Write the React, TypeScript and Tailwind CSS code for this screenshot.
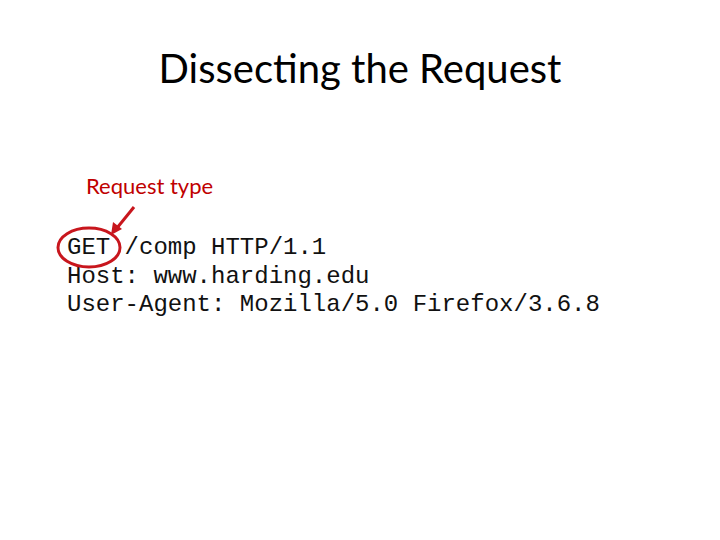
export default function App() {
  return (
    <div className="relative w-[720px] h-[540px] bg-white overflow-hidden">
      <div className="pt-[44px] flex justify-center">
        <h1 className="text-[40px] leading-[48px] text-black" style={{ fontFamily: "Lato, 'Open Sans', sans-serif" }}>
          Dissecting the Request
        </h1>
      </div>
      <div className="mt-[82px] pl-[86px] text-[22px] leading-[24px] text-[#c00000]" style={{ fontFamily: "Lato, 'Open Sans', sans-serif" }}>
        Request type
      </div>
      <div className="mt-[36px] pl-[67px] text-[24px] leading-[28.5px] text-[#111] whitespace-pre" style={{ fontFamily: "'Liberation Mono', monospace" }}>
        <div>GET /comp HTTP/1.1</div>
        <div>Host: www.harding.edu</div>
        <div>User-Agent: Mozilla/5.0 Firefox/3.6.8</div>
      </div>
      <svg className="absolute left-0 top-0" width="720" height="540" viewBox="0 0 720 540">
        <ellipse cx="89" cy="247.5" rx="31" ry="19.5" fill="none" stroke="#c8161d" strokeWidth="3" />
        <line x1="134" y1="207" x2="117" y2="228" stroke="#c8161d" strokeWidth="3" />
        <polygon points="111,235 113,222 122,229" fill="#c8161d" />
      </svg>
    </div>
  );
}
